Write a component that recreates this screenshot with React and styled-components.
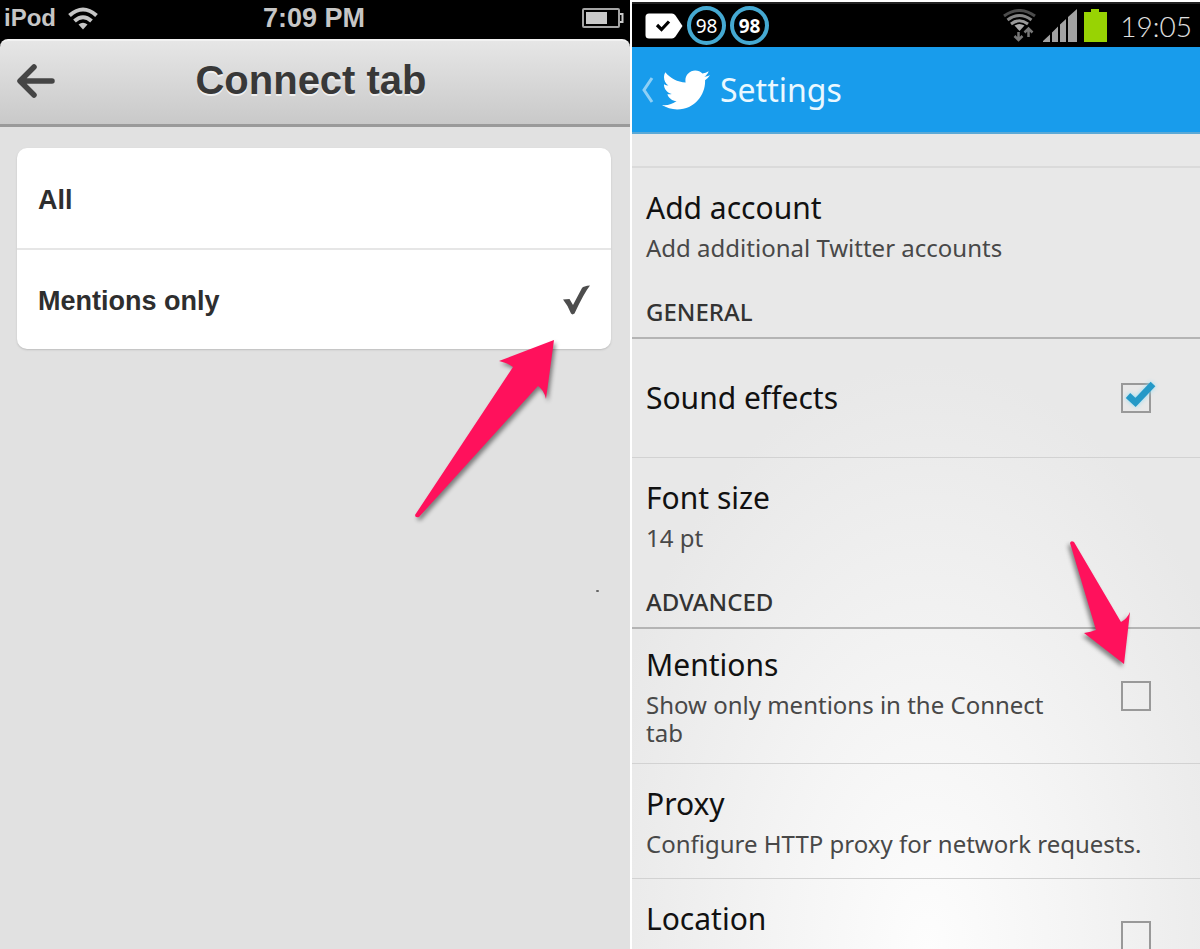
import React, { useState } from "react";
import styled, { createGlobalStyle } from "styled-components";
import { FaTwitter } from "react-icons/fa";

const GlobalStyle = createGlobalStyle`
  *, *::before, *::after { box-sizing: border-box; }
  body { margin: 0; background: #fff; }
  button, input { font: inherit; color: inherit; margin: 0; }
  h1, h2, h3, p { margin: 0; font-weight: inherit; font-size: inherit; }
`;

const Screens = styled.main`
  display: grid;
  grid-template-columns: minmax(0, 630fr) minmax(0, 568fr);
  gap: 2px;
  height: 100vh;
  overflow: hidden;
`;

/* ---------- iPod screen ---------- */

const IosScreen = styled.section`
  background: #e1e1e1;
  font-family: "Liberation Sans", Arial, sans-serif;
  font-weight: 700;
  color: #2e2e2e;
`;

const IosTop = styled.div`
  background: #000;
`;

const IosStatus = styled.div`
  display: grid;
  grid-template-columns: 1fr auto 1fr;
  align-items: center;
  height: 39px;
  padding: 0 6px 3px 4px;
  color: #c6c6c6;
`;

const Carrier = styled.div`
  display: flex;
  align-items: center;
  gap: 12px;
  font-size: 24px;
`;

const IosClock = styled.div`
  font-size: 27px;
`;

const IosBattery = styled.div`
  display: flex;
  justify-content: flex-end;
`;

const IosHeader = styled.header`
  display: grid;
  grid-template-columns: 60px 1fr 68px;
  align-items: center;
  height: 88px;
  padding-bottom: 6px;
  border-radius: 8px 8px 0 0;
  border-top: 2px solid #f2f2f2;
  border-bottom: 3px solid #9a9a9a;
  background: linear-gradient(#e6e6e6, #c9c9c9);
`;

const BackButton = styled.button`
  display: flex;
  padding: 2px 0 0 16px;
  border: 0;
  background: none;
`;

const IosTitle = styled.h1`
  text-align: center;
  font-size: 40px;
  line-height: 48px;
  color: #383838;
  text-shadow: 0 2px 0 #f0f0f0;
`;

const IosBody = styled.div`
  padding: 21px 19px 21px 17px;
`;

const OptionCard = styled.div`
  position: relative;
  border-radius: 10px;
  background: #fff;
  box-shadow: 0 1px 2px #bdbdbd;
`;

const Option = styled.label`
  display: flex;
  align-items: center;
  justify-content: space-between;
  height: 100px;
  padding: 4px 21px 0;
  font-size: 27px;

  & + & {
    height: 101px;
    border-top: 2px solid #e6e6e6;
  }
`;

const OptionInput = styled.input`
  position: absolute;
  opacity: 0;
`;

const OptionCheck = styled.svg`
  margin-bottom: 4px;
`;

const ListArrow = styled.svg`
  position: absolute;
  top: 188px;
  right: 51px;
  filter: drop-shadow(2px 3px 2px rgba(0, 0, 0, 0.45));
  pointer-events: none;
`;

const Speck = styled.span`
  position: absolute;
  top: 442px;
  right: 12px;
  width: 3px;
  height: 2px;
  border-radius: 1px;
  background: #666;
`;

/* ---------- Android screen ---------- */

const DroidScreen = styled.section`
  font-family: "Noto Sans", "Open Sans", sans-serif;
  color: #111;
  display: flex;
  flex-direction: column;
  min-height: 0;
  border-top: 2px solid #fff;
`;

const DroidStatus = styled.div`
  display: flex;
  align-items: center;
  flex: none;
  height: 45px;
  padding: 0 8px 0 13px;
  background: #000;
  border-top: 2px solid #222;
`;

const Notices = styled.div`
  display: flex;
  align-items: center;
  gap: 4px;
  flex: 1;
`;

const LevelRing = styled.span`
  display: flex;
  align-items: center;
  justify-content: center;
  width: 39px;
  height: 39px;
  border: 4px solid #45a9d2;
  border-radius: 50%;
  color: #fff;
  font-size: 19px;
  font-weight: ${(p) => (p.$bold ? 700 : 400)};
`;

const Signals = styled.div`
  display: flex;
  align-items: center;
  gap: 7px;
`;

const DroidClock = styled.div`
  padding-left: 6px;
  font-family: Lato, sans-serif;
  font-weight: 300;
  font-size: 28px;
  color: #e0e0e0;
`;

const DroidHeader = styled.header`
  display: flex;
  align-items: center;
  flex: none;
  height: 87px;
  padding-left: 9px;
  background: #189cec;
  border-bottom: 2px solid #5ba9d6;
  color: #fff;
`;

const HomeButton = styled.button`
  display: flex;
  align-items: center;
  gap: 8px;
  padding: 0;
  border: 0;
  background: none;
`;

const DroidTitle = styled.h1`
  padding-left: 10px;
  font-size: 32px;
  line-height: 40px;
  color: #eaf8ff;
`;

const Settings = styled.div`
  flex: 1;
  min-height: 0;
  overflow: hidden;
  background: radial-gradient(ellipse 60% 72% at 52% 100%, #fdfdfd, #f4f4f4 45%, #e8e8e8);
`;

const ScrolledRow = styled.div`
  height: 34px;
  border-bottom: 2px solid #dadada;
`;

const Row = styled.div`
  position: relative;
  display: flex;
  align-items: center;
  gap: 72px;
  min-height: ${(p) => (p.$tall ? 118 : 114)}px;
  padding: 16px ${(p) => (p.$toggle ? 49 : 14)}px 16px 14px;

  & + & {
    min-height: 115px;
    border-top: 1px solid #d2d2d2;
  }
`;

const RowText = styled.div`
  display: grid;
  align-content: start;
  flex: 1;
  gap: 6px;
  min-height: ${(p) => (p.$twoLine ? 74 : 40)}px;
`;

const RowTitle = styled.h3`
  font-size: 30px;
  line-height: 40px;
`;

const RowNote = styled.p`
  font-size: 24px;
  line-height: 28px;
  color: #484848;
`;

const SectionTitle = styled.h2`
  padding: 16px 14px 11px;
  border-bottom: 2px solid #b4b4b4;
  font-size: 24px;
  line-height: 28px;
  font-weight: 500;
  color: #333;
`;

const Tick = styled.span`
  position: relative;
  flex: none;
  width: 30px;
  height: 30px;
`;

const TickInput = styled.input`
  display: block;
  appearance: none;
  width: 30px;
  height: 30px;
  border: 2px solid #999;
`;

const TickMark = styled.svg`
  position: absolute;
  left: 2px;
  top: -4px;
  pointer-events: none;
  filter: drop-shadow(0 0 2px #8fdcf5);
`;

const MentionsArrow = styled.svg`
  position: absolute;
  top: -94px;
  right: 64px;
  z-index: 1;
  filter: drop-shadow(-2px 3px 2px rgba(0, 0, 0, 0.45));
  pointer-events: none;
`;

function IosWifi() {
  return (
    <svg width="30" height="23" viewBox="0 0 30 23" fill="none" stroke="#c6c6c6" strokeWidth="4" aria-hidden="true">
      <path d="M1.500 8.500Q15 -3.500 28.500 8.500" />
      <path d="M6.500 14Q15 6.500 23.500 14" />
      <path d="M10.500 17.500Q15 14 19.500 17.500L15 22.500Z" fill="#c6c6c6" stroke="none" />
    </svg>
  );
}

function IosBatteryIcon() {
  return (
    <svg width="42" height="21" viewBox="0 0 42 21" role="img" aria-label="Battery">
      <rect x="1" y="1" width="36" height="18" rx="1" fill="#000" stroke="#a5a5a5" strokeWidth="2" />
      <rect x="4" y="4" width="21" height="12" fill="#c9c9c9" />
      <path d="M38 6h2.500v8H38" fill="none" stroke="#c9c9c9" strokeWidth="2" />
    </svg>
  );
}

function BackArrow() {
  return (
    <svg width="40" height="36" viewBox="0 0 40 36" fill="none" stroke="#454545" strokeWidth="5.500" strokeLinecap="round" strokeLinejoin="round" aria-hidden="true">
      <path d="M18 4L4 18l14 14M5 18h31" />
    </svg>
  );
}

function Check() {
  return (
    <OptionCheck width="27" height="30" viewBox="0 0 27 30" aria-hidden="true">
      <path d="M0 14.500L6.500 14l3.500 6L19 3Q20.500 1 27 0.500Q21 8 11.500 28.500L9.500 29.500L8 28.500Q5 20.500 0 14.500Z" fill="#4d4d4d" />
    </OptionCheck>
  );
}

function NoticeTag() {
  return (
    <svg width="38" height="26" viewBox="0 0 38 26" aria-hidden="true">
      <path d="M4 0.500H27Q29 0.500 30.500 2.500L37.500 13L30.500 23.500Q29 25.500 27 25.500H4Q0.500 25.500 0.500 22V4Q0.500 0.500 4 0.500Z" fill="#fff" />
      <path d="M12 12l4.500 4.500L24 8.500" fill="none" stroke="#000" strokeWidth="3.200" />
    </svg>
  );
}

function DroidWifi() {
  return (
    <svg width="33" height="33" viewBox="0 0 33 33" fill="none" strokeWidth="3" aria-hidden="true">
      <path d="M1 7Q16.500 -4 32 7" stroke="#4c4c4c" />
      <path d="M4.500 11Q16.500 2 28.500 11" stroke="#858585" />
      <path d="M8 15Q16.500 8.500 25 15" stroke="#9a9a9a" />
      <path d="M11.500 16.500Q16.500 13.500 21.500 16.500L16.500 22Z" fill="#aaa" />
      <path d="M15.500 23v8M11.500 27l4 4 4-4M25.500 28v-8M21.500 23.500l4-4 4 4" stroke="#777" strokeWidth="2.500" />
    </svg>
  );
}

function SignalBars() {
  return (
    <svg width="34" height="33" viewBox="0 0 34 33" fill="#a2a2a2" aria-hidden="true">
      <path d="M0 33V32L7 25.500V33ZM9 33V23.500L15 17.500V33ZM17 33V15.500L23 10V33ZM25 33V8L34 0V33Z" />
    </svg>
  );
}

function DroidBattery() {
  return (
    <svg width="23" height="33" viewBox="0 0 23 33" fill="#98d303" role="img" aria-label="Battery full">
      <path d="M7 0H15V3H23V33H0V3H7Z" />
    </svg>
  );
}

function Toggle({ id, defaultChecked }) {
  const [on, setOn] = useState(Boolean(defaultChecked));
  return (
    <Tick>
      <TickInput id={id} type="checkbox" checked={on} onChange={(e) => setOn(e.target.checked)} />
      {on && (
        <TickMark width="34" height="30" viewBox="0 0 34 30" fill="none">
          <path d="M5 16.500L12.500 23.500L30 5" stroke="#2499c7" strokeWidth="6.500" />
        </TickMark>
      )}
    </Tick>
  );
}

function Setting({ title, note, toggleId, checked, tall, twoLine, children }) {
  return (
    <Row $tall={tall} $toggle={Boolean(toggleId)}>
      <RowText $twoLine={twoLine}>
        <RowTitle>{toggleId ? <label htmlFor={toggleId}>{title}</label> : title}</RowTitle>
        {note && <RowNote>{note}</RowNote>}
      </RowText>
      {toggleId && <Toggle id={toggleId} defaultChecked={checked} />}
      {children}
    </Row>
  );
}

export default function App() {
  const [scope, setScope] = useState("Mentions only");

  return (
    <>
      <GlobalStyle />
      <Screens>
        <IosScreen>
          <IosTop>
            <IosStatus>
              <Carrier>
                iPod
                <IosWifi />
              </Carrier>
              <IosClock>7:09 PM</IosClock>
              <IosBattery>
                <IosBatteryIcon />
              </IosBattery>
            </IosStatus>
            <IosHeader>
              <BackButton aria-label="Back">
                <BackArrow />
              </BackButton>
              <IosTitle>Connect tab</IosTitle>
            </IosHeader>
          </IosTop>
          <IosBody>
            <OptionCard>
              {["All", "Mentions only"].map((name) => (
                <Option key={name}>
                  {name}
                  <OptionInput type="radio" name="scope" checked={scope === name} onChange={() => setScope(name)} />
                  {scope === name && <Check />}
                </Option>
              ))}
              <ListArrow width="150" height="190" viewBox="0 0 150 190" aria-hidden="true">
                <path d="M144 4L136 63Q134 54 128 50L9 181Q5 182 5 179L103 31Q98 27 89 25Z" fill="#ff115c" />
              </ListArrow>
              <Speck />
            </OptionCard>
          </IosBody>
        </IosScreen>

        <DroidScreen>
          <DroidStatus>
            <Notices>
              <NoticeTag />
              <LevelRing>98</LevelRing>
              <LevelRing $bold>98</LevelRing>
            </Notices>
            <Signals>
              <DroidWifi />
              <SignalBars />
              <DroidBattery />
              <DroidClock>19:05</DroidClock>
            </Signals>
          </DroidStatus>
          <DroidHeader>
            <HomeButton aria-label="Navigate up">
              <svg width="13" height="26" viewBox="0 0 13 26" fill="none" stroke="#8fd0f6" strokeWidth="3" aria-hidden="true">
                <path d="M11 1L3 13l8 12" />
              </svg>
              <FaTwitter size={48} />
            </HomeButton>
            <DroidTitle>Settings</DroidTitle>
          </DroidHeader>
          <Settings>
            <ScrolledRow />
            <Setting title="Add account" note="Add additional Twitter accounts" />
            <SectionTitle>GENERAL</SectionTitle>
            <Setting title="Sound effects" toggleId="sound" checked tall />
            <Setting title="Font size" note="14 pt" />
            <SectionTitle>ADVANCED</SectionTitle>
            <Setting title="Mentions" note="Show only mentions in the Connect tab" toggleId="mentions">
              <MentionsArrow width="72" height="136" viewBox="0 0 72 136" aria-hidden="true">
                <path d="M6 8Q7 5 10 7L57 87Q63 84 66 77L60 129L20 98Q27 97 32 95Z" fill="#ff115c" />
              </MentionsArrow>
            </Setting>
            <Setting title="Proxy" note="Configure HTTP proxy for network requests." />
            <Setting title="Location" toggleId="location" twoLine />
          </Settings>
        </DroidScreen>
      </Screens>
    </>
  );
}
